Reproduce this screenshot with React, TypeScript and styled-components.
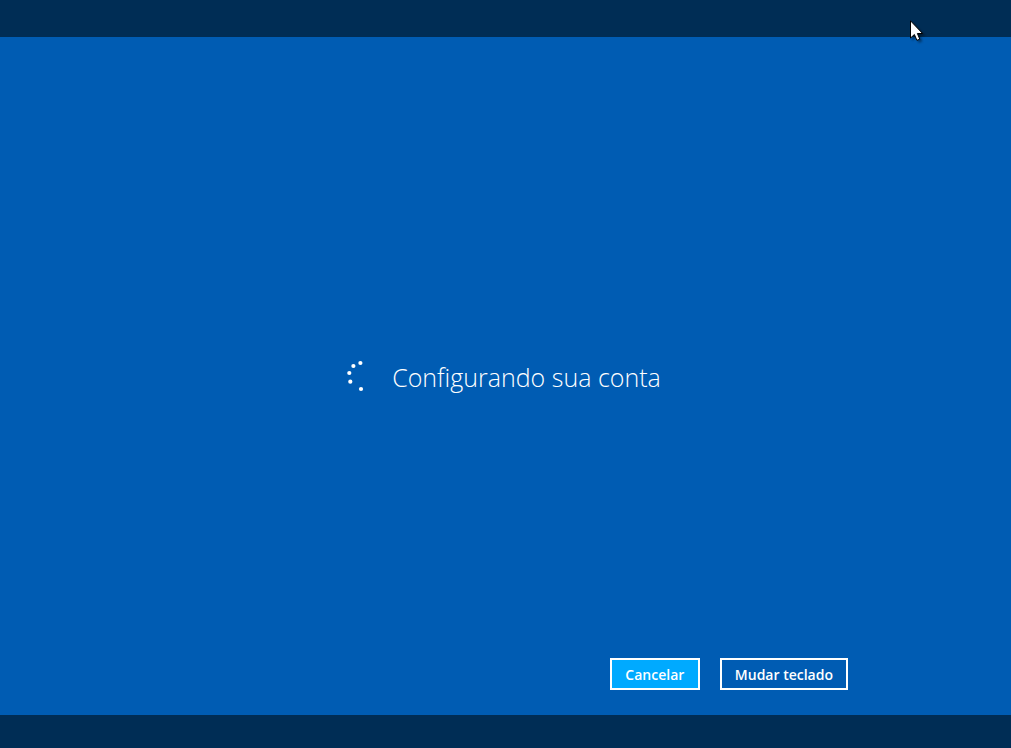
import React from 'react';
import styled, { createGlobalStyle } from 'styled-components';

const GlobalStyle = createGlobalStyle`
  * { box-sizing: border-box; }
  body {
    margin: 0;
    background: #002d55;
    color: #fff;
    font-family: 'Open Sans', 'Noto Sans', sans-serif;
  }
`;

const Screen = styled.div`
  position: relative;
  display: flex;
  flex-direction: column;
  min-height: 100vh;
  padding: 37px 0 33px;
  overflow: hidden;
`;

const Panel = styled.main`
  flex: 1;
  display: grid;
  grid-template-rows: 1fr auto 1fr;
  background: #005cb3;
`;

const Status = styled.div`
  grid-row: 2;
  display: flex;
  align-items: center;
  justify-content: center;
  gap: 14px;
  padding-right: 4px;
`;

const Spinner = styled.svg`
  width: 32px;
  height: 32px;
  fill: #fff;
`;

const Message = styled.h1`
  margin: 0;
  padding-top: 2px;
  font-size: 25px;
  font-weight: 300;
  line-height: 36px;
`;

const Actions = styled.div`
  grid-row: 3;
  align-self: end;
  display: flex;
  justify-content: flex-end;
  gap: 20px;
  padding: 0 163px 25px 20px;
`;

const ActionButton = styled.button<{ $primary?: boolean }>`
  min-width: 90px;
  height: 32px;
  padding: 2px 13px 0;
  border: 2px solid #fff;
  border-radius: 0;
  background: ${({ $primary }) => ($primary ? '#00aaff' : 'transparent')};
  color: #fff;
  font-family: inherit;
  font-size: 14px;
  font-weight: 600;
  line-height: 20px;
  white-space: nowrap;
`;

const Pointer = styled.svg`
  position: absolute;
  top: 20px;
  left: 910px;
  width: 18px;
  height: 24px;
  filter: drop-shadow(2px 2px 1px rgba(0, 0, 0, 0.4));
  pointer-events: none;
`;

const dots = [
  [14.4, 3],
  [7.4, 6],
  [3.3, 13],
  [4.3, 21.7],
  [15, 29],
];

export default function App() {
  return (
    <>
      <GlobalStyle />
      <Screen>
        <Panel>
          <Status role="status">
            <Spinner viewBox="0 0 32 32" aria-hidden="true">
              {dots.map(([x, y]) => (
                <circle key={y} cx={x} cy={y} r="2.1" />
              ))}
            </Spinner>
            <Message>Configurando sua conta</Message>
          </Status>
          <Actions>
            <ActionButton type="button" $primary>Cancelar</ActionButton>
            <ActionButton type="button">Mudar teclado</ActionButton>
          </Actions>
        </Panel>
        <Pointer viewBox="0 0 18 24" aria-hidden="true">
          <path
            d="M.5.8V18l3.9-3.5 2.5 5.8 2.9-1.1-2.4-5.7h5.2Z"
            fill="#fff"
            stroke="#000"
            strokeWidth="1"
          />
        </Pointer>
      </Screen>
    </>
  );
}
